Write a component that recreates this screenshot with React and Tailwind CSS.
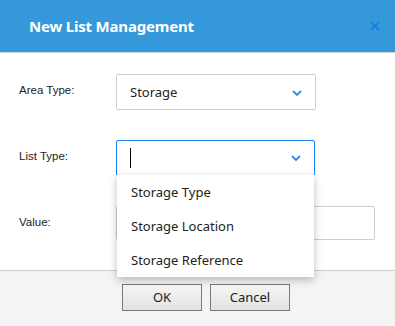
import React from 'react';

const Chevron = () => (
  <svg width="10" height="6" viewBox="0 0 10 6" className="shrink-0">
    <polyline points="1,1 5,5 9,1" fill="none" stroke="#2b8de6" strokeWidth="1.8" />
  </svg>
);

const Label = ({ children }) => (
  <div className="w-[97px] shrink-0 pt-[8px] text-[11.5px] text-[#222] font-['Liberation_Sans',sans-serif]">{children}</div>
);

export default function App() {
  const options = ['Storage Type', 'Storage Location', 'Storage Reference'];

  return (
    <div className="w-[395px] h-[326px] bg-white flex flex-col overflow-hidden font-['Noto_Sans',sans-serif]">
      {/* header */}
      <div className="h-[53px] shrink-0 bg-[#3598db] border-b border-[#c9d6e0] flex items-center justify-between pl-[29px] pr-[15px]">
        <span className="text-white text-[15px] font-bold tracking-[-0.2px]">New List Management</span>
        <svg width="10" height="10" viewBox="0 0 10 10">
          <path d="M1 1 L9 9 M9 1 L1 9" stroke="#1778e0" strokeWidth="1.6" />
        </svg>
      </div>

      {/* body */}
      <div className="h-[217px] shrink-0 pt-[21px] pl-[19px] flex flex-col gap-[30px]">
        <div className="flex">
          <Label>Area Type:</Label>
          <div className="w-[200px] h-[36px] border border-[#cfcfcf] rounded-[2px] flex items-center justify-between pl-[13px] pr-[13px] pt-px text-[13px] text-[#222]">
            <span>Storage</span>
            <Chevron />
          </div>
        </div>

        <div className="flex">
          <Label>List Type:</Label>
          <div className="relative">
            <div className="w-[199px] h-[36px] border border-[#1a84f0] rounded-[2px] flex items-center justify-between pl-[13px] pr-[13px]">
              <span className="w-px h-[20px] bg-black"></span>
              <Chevron />
            </div>
            <div className="absolute left-px top-[35px] w-[197px] bg-white shadow-[0_3px_8px_rgba(0,0,0,0.25)] z-10">
              {options.map((o) => (
                <div key={o} className="h-[34px] flex items-center pl-[14px] pt-[2px] text-[13px] text-[#222]">{o}</div>
              ))}
            </div>
          </div>
        </div>

        <div className="flex">
          <Label>Value:</Label>
          <div className="w-[259px] h-[34px] border border-[#cfcfcf] rounded-[2px]"></div>
        </div>
      </div>

      {/* footer */}
      <div className="flex-1 bg-[#f4f4f4] border-t border-[#cfcfcf] flex justify-center gap-[8px] pt-[13px] pl-[17px]">
        <button className="w-[80px] h-[27px] border border-[#7a7a7a] bg-gradient-to-b from-[#f6f6f6] to-[#e2e2e2] text-[13px] text-[#222]">OK</button>
        <button className="w-[80px] h-[27px] border border-[#7a7a7a] bg-gradient-to-b from-[#f6f6f6] to-[#e2e2e2] text-[13px] text-[#222]">Cancel</button>
      </div>
    </div>
  );
}
